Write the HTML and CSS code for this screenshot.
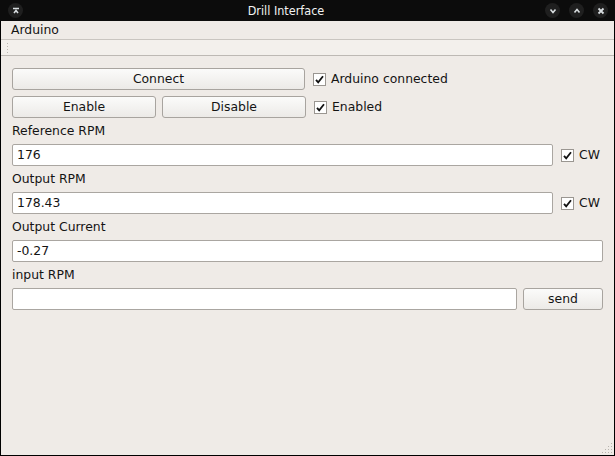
FILE: index.html
```html
<!DOCTYPE html>
<html>
<head>
<meta charset="utf-8">
<link rel="stylesheet" href="styles.css">
</head>
<body>
<div class="window">
  <div class="titlebar">
    <span class="tb-btn tb-left"><svg width="10" height="10" viewBox="0 0 10 10"><path d="M2 2.5h6M3 7l2-2.5 2 2.5" stroke="#d8dde0" stroke-width="1.6" fill="none"/></svg></span>
    <span class="title">Drill Interface</span>
    <div class="tb-right">
      <span class="tb-btn"><svg width="10" height="10" viewBox="0 0 10 10"><path d="M2.5 3.5l2.5 3 2.5-3" stroke="#d8dde0" stroke-width="1.6" fill="none"/></svg></span>
      <span class="tb-btn"><svg width="10" height="10" viewBox="0 0 10 10"><path d="M2.5 6.5l2.5-3 2.5 3" stroke="#d8dde0" stroke-width="1.6" fill="none"/></svg></span>
      <span class="tb-btn"><svg width="10" height="10" viewBox="0 0 10 10"><path d="M2.5 2.5l5 5M7.5 2.5l-5 5" stroke="#d8dde0" stroke-width="1.8" fill="none"/></svg></span>
    </div>
  </div>
  <div class="menubar"><span class="menu-item">Arduino</span></div>
  <div class="toolbar"><span class="grip"></span></div>
  <div class="content">
    <div class="row">
      <button class="btn wide">Connect</button>
      <label class="check"><span class="box"><svg width="9" height="9" viewBox="0 0 9 9"><path d="M1 4.8l2.2 2.6L8 1.2" stroke="#111" stroke-width="1.8" fill="none"/></svg></span><span class="ctext">Arduino connected</span></label>
    </div>
    <div class="row">
      <button class="btn half">Enable</button>
      <button class="btn half">Disable</button>
      <label class="check"><span class="box"><svg width="9" height="9" viewBox="0 0 9 9"><path d="M1 4.8l2.2 2.6L8 1.2" stroke="#111" stroke-width="1.8" fill="none"/></svg></span><span class="ctext">Enabled</span></label>
    </div>
    <div class="label">Reference RPM</div>
    <div class="row">
      <div class="field grow">176</div>
      <label class="check cw"><span class="box"><svg width="9" height="9" viewBox="0 0 9 9"><path d="M1 4.8l2.2 2.6L8 1.2" stroke="#111" stroke-width="1.8" fill="none"/></svg></span><span class="ctext">CW</span></label>
    </div>
    <div class="label">Output RPM</div>
    <div class="row">
      <div class="field grow">178.43</div>
      <label class="check cw"><span class="box"><svg width="9" height="9" viewBox="0 0 9 9"><path d="M1 4.8l2.2 2.6L8 1.2" stroke="#111" stroke-width="1.8" fill="none"/></svg></span><span class="ctext">CW</span></label>
    </div>
    <div class="label">Output Current</div>
    <div class="row">
      <div class="field grow">-0.27</div>
    </div>
    <div class="label">input RPM</div>
    <div class="row">
      <div class="field grow"></div>
      <button class="btn send">send</button>
    </div>
  </div>
  <span class="sizegrip">
    <svg width="12" height="12" viewBox="0 0 12 12" fill="#b8b4ae">
      <rect x="10" y="1" width="1" height="1"/>
      <rect x="7" y="4" width="1" height="1"/><rect x="10" y="4" width="1" height="1"/>
      <rect x="4" y="7" width="1" height="1"/><rect x="7" y="7" width="1" height="1"/><rect x="10" y="7" width="1" height="1"/>
      <rect x="1" y="10" width="1" height="1"/><rect x="4" y="10" width="1" height="1"/><rect x="7" y="10" width="1" height="1"/><rect x="10" y="10" width="1" height="1"/>
    </svg>
  </span>
</div>
</body>
</html>
```
FILE: styles.css
```css
* { box-sizing: border-box; }
html, body { margin: 0; padding: 0; background: #000; }
body {
  font-family: "DejaVu Sans", sans-serif;
  font-size: 12.4px;
  color: #141414;
}
.window {
  position: relative;
  width: 615px;
  height: 456px;
  background: #efebe7;
  border: 1px solid #000;
  border-top: none;
  display: flex;
  flex-direction: column;
}
.titlebar {
  height: 21px;
  background: #0c0c0c;
  margin: 0 -1px;
  display: flex;
  align-items: center;
  padding: 0 7px 0 8px;
}
.title {
  flex: 1;
  text-align: center;
  color: #f2f2f2;
  font-family: "DejaVu Sans Condensed", "DejaVu Sans", sans-serif;
  font-size: 12.5px;
  line-height: 21px;
  padding-left: 4px;
}
.tb-btn {
  width: 15px;
  height: 15px;
  border-radius: 50%;
  background: #1f1f1f;
  display: flex;
  align-items: center;
  justify-content: center;
}
.tb-right {
  display: flex;
  gap: 9px;
}
.menubar {
  height: 18px;
  display: flex;
  align-items: center;
  padding-left: 10px;
}
.menu-item { line-height: 18px; }
.toolbar {
  height: 17px;
  border-top: 1px solid #c9c5c0;
  border-bottom: 1px solid #bdb9b4;
  background: #f3f0ec;
  padding: 2px 0 0 5px;
}
.grip {
  display: block;
  width: 3px;
  height: 13px;
  background-image: radial-gradient(circle, #bcb8b2 0.6px, transparent 0.8px);
  background-size: 3px 3px;
}
.content {
  padding: 12px 11px 0 11px;
  display: flex;
  flex-direction: column;
}
.row {
  display: flex;
  align-items: center;
  height: 22px;
  margin-bottom: 6px;
}
.label {
  height: 20px;
  line-height: 13px;
}
.btn {
  font-family: "DejaVu Sans", sans-serif;
  font-size: 12.4px;
  color: #141414;
  height: 22px;
  border: 1px solid #a8a49f;
  border-radius: 3px;
  background: linear-gradient(#fbfbfa, #eceae7);
  padding: 0 0 2px 0;
}
.wide { width: 293px; }
.half { width: 144px; }
.half + .half { margin-left: 6px; }
.send { width: 80px; margin-left: 6px; }
.check {
  display: flex;
  align-items: center;
  margin-left: 8px;
}
.ctext { position: relative; top: -1px; }
.box {
  width: 13px;
  height: 13px;
  border: 1px solid #9a9691;
  background: #fff;
  margin-right: 5px;
  display: inline-flex;
  align-items: center;
  justify-content: center;
}
.cw { margin-left: 8px; width: 42px; }
.field {
  height: 22px;
  background: #fff;
  border: 1px solid #aaa6a1;
  border-radius: 2px;
  padding: 0 4px;
  line-height: 20px;
}
.grow { flex: 1; }
.sizegrip {
  position: absolute;
  right: 1px;
  bottom: 1px;
  width: 12px;
  height: 12px;
}
```
